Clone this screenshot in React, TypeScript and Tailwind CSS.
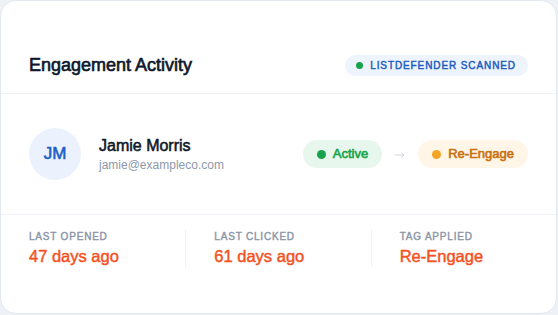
const FONT = '"Liberation Sans", Arial, sans-serif'

function Pill({ label, tone }: { label: string; tone: 'green' | 'amber' }) {
  const styles =
    tone === 'green'
      ? { wrap: 'bg-[#e7f7ed] text-[#16a34a]', dot: 'bg-[#16a34a]' }
      : { wrap: 'bg-[#fff6e8] text-[#c8700c]', dot: 'bg-[#f5a524]' }
  return (
    <span className={`inline-flex h-[28px] items-center gap-[7px] rounded-full px-[14px] text-[13px] [-webkit-text-stroke:0.6px] ${styles.wrap}`}>
      <span className={`h-[9px] w-[9px] rounded-full ${styles.dot}`} />
      {label}
    </span>
  )
}

function Stat({ label, value }: { label: string; value: string }) {
  return (
    <div className="flex-1 border-l border-[#eef1f5] px-7 first:border-l-0 first:pl-0 last:pr-0">
      <div className="text-[10px] uppercase leading-[14px] tracking-[0.08em] text-[#8a94a6] [-webkit-text-stroke:0.4px]">{label}</div>
      <div className="mt-[1px] text-[16.5px] leading-[22px] text-[#f4511e] [-webkit-text-stroke:0.45px]">{value}</div>
    </div>
  )
}

export default function App() {
  return (
    <div className="h-[315px] w-[558px] bg-[#eef2f7]" style={{ fontFamily: FONT }}>
      <div className="flex h-[314px] w-[557px] flex-col overflow-hidden rounded-[16px] border border-[#e3e8ef] bg-white">
        {/* header */}
        <div className="flex items-center justify-between border-b border-[#eef1f5] px-7 pb-[16px] pt-[52px]">
          <h2 className="text-[18px] leading-[24px] text-[#0f172a] [-webkit-text-stroke:0.65px]">Engagement Activity</h2>
          <span className="inline-flex h-[21px] items-center gap-[7px] rounded-full bg-[#edf4fe] pl-[11px] pr-[12px] text-[10px] uppercase tracking-[0.09em] text-[#1e5bbf] [-webkit-text-stroke:0.45px]">
            <span className="h-[7px] w-[7px] rounded-full bg-[#16a34a]" />
            ListDefender Scanned
          </span>
        </div>

        {/* contact row */}
        <div className="flex h-[121px] items-center justify-between border-b border-[#eef1f5] px-7">
          <div className="flex items-center gap-[18px]">
            <div className="flex h-[52px] w-[52px] items-center justify-center rounded-full bg-[#ebf2fe] text-[17px] text-[#1d5fc7] [-webkit-text-stroke:0.6px]">
              JM
            </div>
            <div className="pt-[2px]">
              <div className="text-[16px] leading-[20px] text-[#0f172a] [-webkit-text-stroke:0.55px]">Jamie Morris</div>
              <div className="text-[12px] leading-[18px] text-[#8e98ab]">jamie@exampleco.com</div>
            </div>
          </div>
          <div className="flex items-center gap-[13px]">
            <Pill label="Active" tone="green" />
            <svg width="10" height="6" viewBox="0 0 10 6" fill="none" stroke="#cdd4e0" strokeWidth="1" className="mt-[2px]">
              <path d="M0 3h9M6.5 0.8 9 3 6.5 5.2" />
            </svg>
            <Pill label="Re-Engage" tone="amber" />
          </div>
        </div>

        {/* stats */}
        <div className="flex px-7 pt-[15px]">
          <Stat label="Last Opened" value="47 days ago" />
          <Stat label="Last Clicked" value="61 days ago" />
          <Stat label="Tag Applied" value="Re-Engage" />
        </div>
      </div>
    </div>
  )
}
